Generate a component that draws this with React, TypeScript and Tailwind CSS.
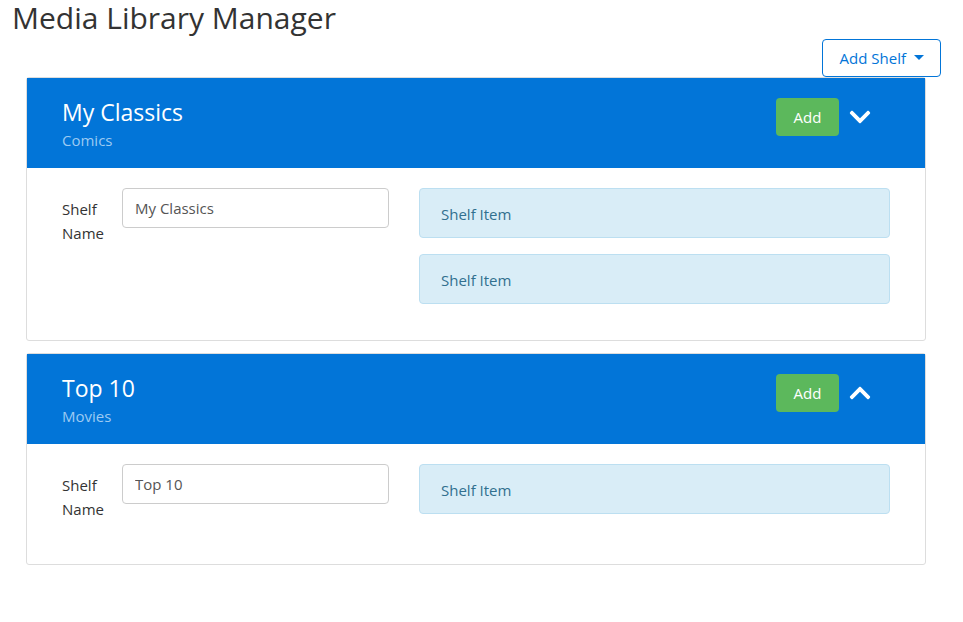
import { FaChevronDown, FaChevronUp } from "react-icons/fa";

type Shelf = {
  name: string;
  type: string;
  items: string[];
  open: boolean;
};

const shelves: Shelf[] = [
  { name: "My Classics", type: "Comics", items: ["Shelf Item", "Shelf Item"], open: true },
  { name: "Top 10", type: "Movies", items: ["Shelf Item"], open: false },
];

function ShelfPanel({ shelf }: { shelf: Shelf }) {
  return (
    <div className="border border-[#dddddd] rounded-[3px] mb-3 bg-white">
      <div className="h-[90px] bg-[#0275d8] flex flex-row pl-[35px] pr-[53px] pt-5">
        <div className="flex-1">
          <h2 className="text-[23px] leading-[28px] text-white">{shelf.name}</h2>
          <div className="mt-[2px] text-[15px] leading-6 text-[#9ccaf2]">{shelf.type}</div>
        </div>
        <div className="flex flex-row items-start">
          <button className="h-[38px] w-[63px] rounded-[4px] bg-[#5cb85c] text-white text-[15px]">
            Add
          </button>
          <div className="h-[38px] flex items-center ml-[9px] text-white">
            {shelf.open ? <FaChevronDown size={24} /> : <FaChevronUp size={24} />}
          </div>
        </div>
      </div>
      <div className="flex flex-row px-[35px] pt-5 pb-5">
        <div className="w-[327px] min-h-[80px] flex flex-row items-start">
          <label className="w-[45px] mr-[15px] pt-[9px] text-[15px] leading-6 text-[#333]">
            Shelf Name
          </label>
          <input
            className="flex-1 h-10 border border-[#cccccc] rounded-[4px] px-3 text-[15px] text-[#555] outline-none"
            defaultValue={shelf.name}
          />
        </div>
        <div className="flex-1 ml-[30px]">
          {shelf.items.map((item, i) => (
            <div
              key={i}
              className="h-[50px] mb-4 flex items-center pl-[21px] pt-[2px] bg-[#d9edf7] border border-[#bcdff1] rounded-[4px] text-[15px] text-[#31708f]"
            >
              {item}
            </div>
          ))}
        </div>
      </div>
    </div>
  );
}

export default function App() {
  return (
    <div className="min-h-screen bg-white font-['Open_Sans',sans-serif] text-[#333]">
      <h1 className="pl-3 text-[30px] leading-[36px] text-[#333]">Media Library Manager</h1>
      <div className="flex flex-row justify-end pr-[22px] mt-[3px]">
        <button className="h-[38px] pl-[17px] pr-4 border border-[#0275d8] rounded-[4px] text-[#0275d8] text-[15px] flex items-center">
          Add Shelf
          <svg width="10" height="6" viewBox="0 0 10 6" className="ml-2">
            <polygon points="0,0 10,0 5,5" fill="#0275d8" />
          </svg>
        </button>
      </div>
      <div className="ml-[26px] mr-[37px]">
        {shelves.map((s, i) => (
          <ShelfPanel key={i} shelf={s} />
        ))}
      </div>
    </div>
  );
}
